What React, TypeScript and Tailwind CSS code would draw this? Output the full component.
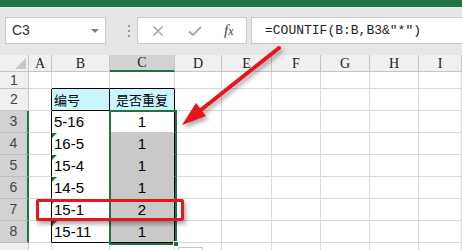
import React from "react";

const columns = ["A", "B", "C", "D", "E", "F", "G", "H", "I"];

const records = [
  { code: "5-16", dup: "1" },
  { code: "16-5", dup: "1" },
  { code: "15-4", dup: "1" },
  { code: "14-5", dup: "1" },
  { code: "15-1", dup: "2" },
  { code: "15-11", dup: "1" },
];

function ErrorMark() {
  return (
    <span className="absolute left-0 top-0 h-0 w-0 border-r-[5px] border-t-[5px] border-r-transparent border-t-[#1f7a3a]" />
  );
}

function Toolbar() {
  return (
    <div className="flex h-[48px] items-center bg-[#e6e6e6] pb-px">
      <div className="ml-[5px] flex h-[27px] w-[101px] items-center justify-between border border-[#c8c8c8] bg-white pl-[6px] pr-[6px] text-[14px] text-[#333]">
        <span>C3</span>
        <span className="h-0 w-0 border-x-[4px] border-t-[4px] border-x-transparent border-t-[#808080]" />
      </div>
      <div className="ml-[15px] flex w-[16px] flex-col items-center gap-[3px]">
        <span className="h-[2px] w-[2px] bg-[#9a9a9a]" />
        <span className="h-[2px] w-[2px] bg-[#9a9a9a]" />
        <span className="h-[2px] w-[2px] bg-[#9a9a9a]" />
      </div>
      <div className="flex h-[27px] w-[110px] items-center border border-[#c8c8c8] bg-white pl-[14px]">
        <svg width="12" height="12" viewBox="0 0 12 12" className="mr-[24px]">
          <path d="M1.5 1.5 L10.5 10.5 M10.5 1.5 L1.5 10.5" stroke="#a8a8a8" strokeWidth="1.6" fill="none" />
        </svg>
        <svg width="14" height="12" viewBox="0 0 14 12" className="mr-[22px]">
          <path d="M1 6.5 L5 10 L13 2" stroke="#a8a8a8" strokeWidth="1.8" fill="none" />
        </svg>
        <span className="font-['Liberation_Serif'] text-[15px] italic text-[#444]">
          f<span className="text-[12px]">x</span>
        </span>
      </div>
      <div className="ml-[4px] flex h-[27px] flex-1 items-center border border-r-0 border-[#c8c8c8] bg-white pl-[13px] font-['Liberation_Mono'] text-[13px] text-[#222]">
        =COUNTIF(B:B,B3&amp;"*")
      </div>
    </div>
  );
}

function HeaderRow() {
  return (
    <>
      <div className="relative border-b border-r border-[#c6c6c6] bg-[#f0f0f0]">
        <span className="absolute bottom-[2px] right-[2px] h-0 w-0 border-b-[11px] border-l-[11px] border-b-[#c8c8c8] border-l-transparent" />
      </div>
      {columns.map((c) =>
        c === "C" ? (
          <div
            key={c}
            className="flex items-center justify-center border-b-2 border-r border-b-[#217346] border-r-[#c6c6c6] bg-[#d2d2d2] font-['Liberation_Serif'] text-[14px] text-[#222]"
          >
            {c}
          </div>
        ) : (
          <div
            key={c}
            className="flex items-center justify-center border-b border-r border-[#c6c6c6] bg-[#f0f0f0] font-['Liberation_Serif'] text-[14px] text-[#222]"
          >
            {c}
          </div>
        )
      )}
    </>
  );
}

function RowHeader({ n }: { n: number }) {
  const selected = n >= 3 && n <= 8;
  const label = n < 9 ? n : "";
  return selected ? (
    <div className="flex items-center justify-center border-b border-r-2 border-b-[#bdbdbd] border-r-[#217346] bg-[#d2d2d2] text-[14px] text-[#444]">
      {label}
    </div>
  ) : (
    <div className="flex items-center justify-center border-b border-r border-[#c6c6c6] bg-[#f0f0f0] text-[14px] text-[#444]">
      {label}
    </div>
  );
}

function Plain({ count }: { count: number }) {
  return (
    <>
      {Array.from({ length: count }).map((_, i) => (
        <div key={i} className="border-b border-r border-[#d9d9d9]" />
      ))}
    </>
  );
}

function GridRow({ n }: { n: number }) {
  const inTable = n >= 2 && n <= 8;
  const rec = n >= 3 ? records[n - 3] : undefined;
  const last = n === 8;

  let b: React.ReactNode;
  let c: React.ReactNode;
  if (n === 1 || n === 9) {
    b = <div className={n === 1 ? "border-b border-r border-b-black border-r-[#d9d9d9]" : "border-b border-r border-[#d9d9d9]"} />;
    c = <div className={n === 1 ? "border-b border-r border-b-black border-r-[#d9d9d9]" : "border-b border-r border-[#d9d9d9]"} />;
  } else if (n === 2) {
    b = (
      <div className="flex items-center border-b border-r border-black bg-[#cbf6fd] pl-[2px] font-['Noto_Sans_CJK_SC'] text-[13px] text-black">
        编号
      </div>
    );
    c = (
      <div className="flex items-center justify-center border-b border-r border-black bg-[#cbf6fd] font-['Noto_Sans_CJK_SC'] text-[13px] text-black">
        是否重复
      </div>
    );
  } else {
    b = (
      <div
        className={
          last
            ? "relative flex items-center border-b border-r border-black bg-white pl-[2px] pt-px text-[15px] text-black"
            : "relative flex items-center border-b border-r border-b-white border-r-black bg-white pl-[2px] pt-px text-[15px] text-black"
        }
      >
        {n >= 4 && <ErrorMark />}
        {rec?.code}
      </div>
    );
    c =
      n === 3 ? (
        <div className="flex items-center justify-center border-b border-r border-b-[#c9c9c9] border-r-black bg-white pt-px text-[15px] text-black">
          {rec?.dup}
        </div>
      ) : (
        <div
          className={
            last
              ? "flex items-center justify-center border-b border-r border-black bg-[#c9c9c9] pt-px text-[15px] text-black"
              : "flex items-center justify-center border-b border-r border-b-[#c9c9c9] border-r-black bg-[#c9c9c9] pt-px text-[15px] text-black"
          }
        >
          {rec?.dup}
        </div>
      );
  }

  return (
    <>
      <RowHeader n={n} />
      <div className={inTable ? "border-b border-r border-b-[#d9d9d9] border-r-black" : "border-b border-r border-[#d9d9d9]"} />
      {b}
      {c}
      <Plain count={6} />
    </>
  );
}

function Annotations() {
  return (
    <>
      {/* selection outline + fill handle */}
      <div className="absolute left-[109px] top-[110px] h-[135px] w-[68px] border-2 border-[#217346]" />
      <div className="absolute left-[173px] top-[241px] h-[6px] w-[6px] border border-white bg-[#217346]" />
      <div className="absolute left-[178px] top-[247px] h-[10px] w-[25px] border border-[#c6c6c6] bg-white" />

      {/* red highlight box */}
      <div className="absolute left-[36px] top-[199px] h-[22px] w-[148px] rounded-[2px] border-[3px] border-[#e5161c] shadow-[2px_3px_4px_rgba(0,0,0,0.35)]" />

      {/* red arrow */}
      <svg className="pointer-events-none absolute left-0 top-0" width="462" height="250" viewBox="0 0 462 250">
        <defs>
          <filter id="sh" x="-20%" y="-20%" width="140%" height="140%">
            <feDropShadow dx="2" dy="3" stdDeviation="2" floodColor="#000" floodOpacity="0.35" />
          </filter>
        </defs>
        <g filter="url(#sh)">
          <line x1="279" y1="48" x2="197" y2="113" stroke="#e8121b" strokeWidth="4" strokeLinecap="round" />
          <polygon points="182,125 206,116 196,103" fill="#e8121b" />
        </g>
      </svg>
    </>
  );
}

export default function App() {
  return (
    <div className="relative h-[250px] w-[462px] overflow-hidden bg-white font-['Liberation_Sans']">
      <div className="h-[7px] bg-[#217346]" />
      <Toolbar />
      <div className="grid grid-cols-[29px_23px_58px_65px_47px_50px_49px_49px_49px_43px] grid-rows-[17px_17px_22px_22px_22px_22px_22px_22px_22px_22px]">
        <HeaderRow />
        {[1, 2, 3, 4, 5, 6, 7, 8, 9].map((n) => (
          <GridRow key={n} n={n} />
        ))}
      </div>
      <Annotations />
    </div>
  );
}
